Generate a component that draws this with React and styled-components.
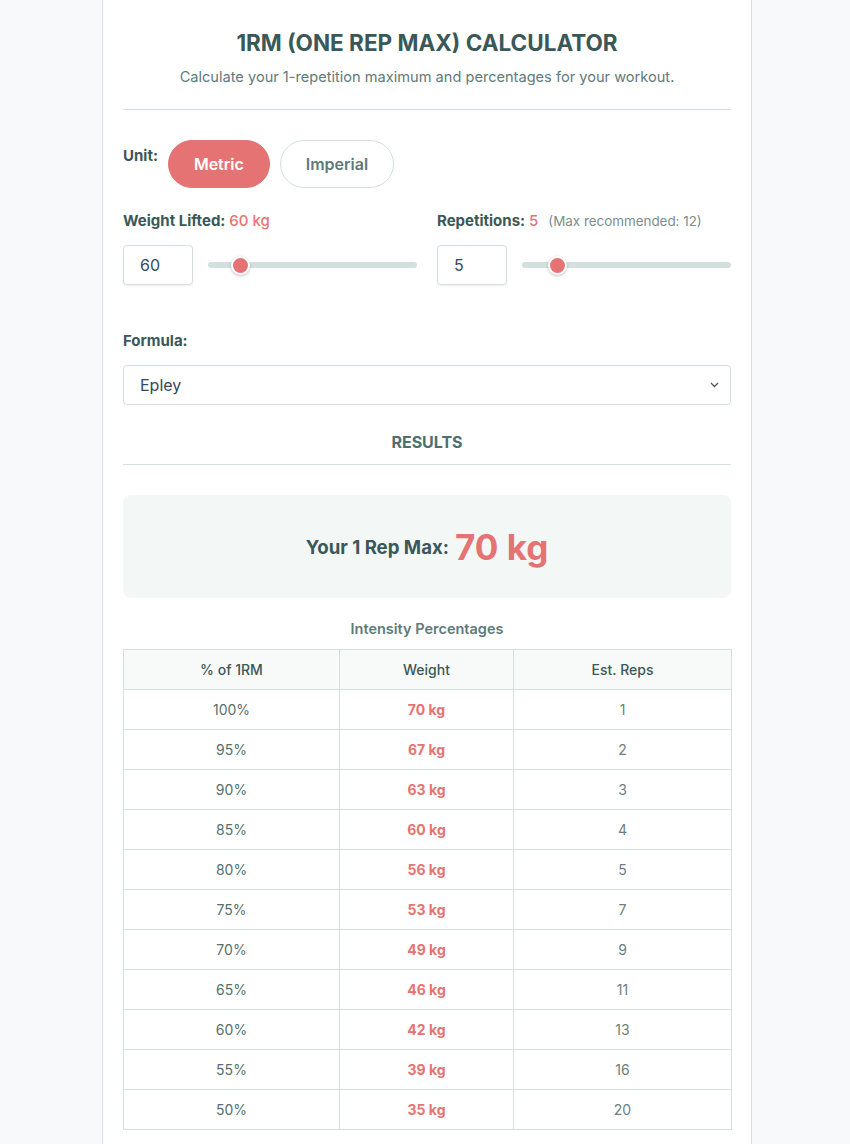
import React, { useState } from "react";
import styled, { createGlobalStyle } from "styled-components";

const RED = "#e57373";
const INK = "#3b5858";
const MUTED = "#5f7a7a";
const LINE = "#d3e0de";

const GlobalStyle = createGlobalStyle`
  * { box-sizing: border-box; }
  body {
    margin: 0;
    background: #f7f9fb;
    font-family: Inter, Roboto, "Liberation Sans", Arial, sans-serif;
    color: ${INK};
  }
`;

const Page = styled.div`
  display: flex;
  justify-content: center;
  padding-left: 4px;
`;

const Card = styled.div`
  width: 650px;
  background: #fff;
  border: 1px solid ${LINE};
  border-top: none;
  padding: 0 20px 40px;
`;

const Header = styled.header`
  text-align: center;
  padding-top: 30px;
  padding-bottom: 22px;
  border-bottom: 1px solid ${LINE};
`;

const Title = styled.h1`
  margin: 0;
  font-size: 22.5px;
  line-height: 26px;
  font-weight: 700;
  color: ${INK};
`;

const Subtitle = styled.p`
  margin: 11px 0 0;
  font-size: 14.6px;
  line-height: 20px;
  color: ${MUTED};
`;

const UnitRow = styled.div`
  display: flex;
  align-items: flex-start;
  gap: 10px;
  margin-top: 30px;
`;

const Label = styled.label`
  display: block;
  font-size: 15px;
  line-height: 18px;
  font-weight: 700;
  color: ${INK};
  padding-top: ${(p) => p.$offset || 0}px;
`;

const UnitButton = styled.button`
  height: 48px;
  padding: 0 25px;
  border-radius: 24px;
  font-family: inherit;
  font-size: 16px;
  font-weight: 600;
  cursor: pointer;
  border: 1px solid ${(p) => (p.$active ? RED : LINE)};
  background: ${(p) => (p.$active ? RED : "#fff")};
  color: ${(p) => (p.$active ? "#fff" : MUTED)};
`;

const TwoCols = styled.div`
  display: grid;
  grid-template-columns: 1fr 1fr;
  gap: 20px;
  margin-top: 24px;
`;

const Field = styled.div`
  display: flex;
  flex-direction: column;
  gap: 15px;
  margin-top: ${(p) => p.$mt || 0}px;
`;

const Value = styled.span`
  color: ${RED};
  font-weight: 500;
  margin-left: 4px;
`;

const Hint = styled.span`
  font-size: 13.4px;
  font-weight: 400;
  color: #7b8e8e;
  margin-left: 10px;
`;

const InputRow = styled.div`
  display: flex;
  align-items: center;
  gap: 15px;
`;

const NumberBox = styled.input`
  width: 70px;
  height: 40px;
  padding: 0 16px;
  border: 1px solid ${LINE};
  border-radius: 4px;
  box-shadow: 0 1px 2px rgba(0, 0, 0, 0.08);
  font-family: inherit;
  font-size: 16px;
  color: #34495e;
  outline: none;
`;

const Slider = styled.input`
  flex: 1;
  margin: 0;
  height: 18px;
  background: transparent;
  -webkit-appearance: none;
  appearance: none;

  &::-webkit-slider-runnable-track {
    height: 6px;
    border-radius: 3px;
    background: #d3e0dd;
  }
  &::-webkit-slider-thumb {
    -webkit-appearance: none;
    width: 19px;
    height: 19px;
    margin-top: -6.5px;
    border-radius: 50%;
    background: ${RED};
    border: 2px solid #fff;
    box-shadow: 0 1px 3px rgba(0, 0, 0, 0.25);
  }
`;

const SelectWrap = styled.div`
  position: relative;
`;

const Select = styled.select`
  width: 100%;
  height: 40px;
  padding: 0 16px;
  border: 1px solid ${LINE};
  border-radius: 4px;
  background: #fff;
  font-family: inherit;
  font-size: 16px;
  color: #34495e;
  -webkit-appearance: none;
  appearance: none;
  outline: none;
`;

const Chevron = styled.svg`
  position: absolute;
  right: 12px;
  top: 17px;
  pointer-events: none;
`;

const SectionHead = styled.h2`
  margin: 27px 0 0;
  padding-bottom: 12px;
  border-bottom: 1px solid ${LINE};
  text-align: center;
  font-size: 16px;
  line-height: 20px;
  font-weight: 700;
  color: #4f6f6f;
`;

const ResultBox = styled.div`
  margin-top: 30px;
  height: 103px;
  border-radius: 8px;
  background: #f3f7f6;
  display: flex;
  align-items: center;
  justify-content: center;
  gap: 6px;
  font-size: 18.6px;
  font-weight: 700;
  color: ${INK};
`;

const Big = styled.span`
  font-size: 35px;
  color: ${RED};
`;

const TableTitle = styled.h3`
  margin: 22px 0 11px;
  text-align: center;
  font-size: 14.5px;
  line-height: 18px;
  font-weight: 600;
  color: ${MUTED};
`;

const Table = styled.table`
  width: 100%;
  border-collapse: collapse;
  table-layout: fixed;
  font-size: 14px;
`;

const Th = styled.th`
  width: ${(p) => p.$w}px;
  height: 40px;
  border: 1px solid ${LINE};
  background: #f8faf9;
  font-weight: 500;
  color: ${INK};
`;

const Td = styled.td`
  height: 40px;
  border: 1px solid ${LINE};
  text-align: center;
  color: ${(p) => (p.$hot ? RED : p.$soft ? "#6b8080" : "#56706f")};
  font-weight: ${(p) => (p.$hot ? 700 : 400)};
`;

const percents = [100, 95, 90, 85, 80, 75, 70, 65, 60, 55, 50];
const repsFor = { 100: 1, 95: 2, 90: 3, 85: 4, 80: 5, 75: 7, 70: 9, 65: 11, 60: 13, 55: 16, 50: 20 };

export default function App() {
  const [unit, setUnit] = useState("kg");
  const [weight, setWeight] = useState(60);
  const [reps, setReps] = useState(5);
  const [formula, setFormula] = useState("epley");

  const oneRm = Math.round(weight * (1 + reps / 30));

  return (
    <>
      <GlobalStyle />
      <Page>
        <Card>
          <Header>
            <Title>1RM (ONE REP MAX) CALCULATOR</Title>
            <Subtitle>Calculate your 1-repetition maximum and percentages for your workout.</Subtitle>
          </Header>

          <UnitRow>
            <Label $offset={7}>Unit:</Label>
            <UnitButton $active={unit === "kg"} onClick={() => setUnit("kg")}>Metric</UnitButton>
            <UnitButton $active={unit === "lb"} onClick={() => setUnit("lb")}>Imperial</UnitButton>
          </UnitRow>

          <TwoCols>
            <Field>
              <Label>
                Weight Lifted:<Value>{weight} {unit}</Value>
              </Label>
              <InputRow>
                <NumberBox type="text" value={weight} onChange={(e) => setWeight(Number(e.target.value) || 0)} />
                <Slider type="range" min={0} max={500} value={weight} onChange={(e) => setWeight(Number(e.target.value))} />
              </InputRow>
            </Field>
            <Field>
              <Label>
                Repetitions:<Value>{reps}</Value>
                <Hint>(Max recommended: 12)</Hint>
              </Label>
              <InputRow>
                <NumberBox type="text" value={reps} onChange={(e) => setReps(Number(e.target.value) || 1)} />
                <Slider type="range" min={1} max={30} value={reps} onChange={(e) => setReps(Number(e.target.value))} />
              </InputRow>
            </Field>
          </TwoCols>

          <Field $mt={47}>
            <Label>Formula:</Label>
            <SelectWrap>
              <Select value={formula} onChange={(e) => setFormula(e.target.value)}>
                <option value="epley">Epley</option>
                <option value="brzycki">Brzycki</option>
                <option value="lombardi">Lombardi</option>
              </Select>
              <Chevron width="9" height="6" viewBox="0 0 9 6">
                <path d="M1 1l3.5 3.5L8 1" fill="none" stroke="#555" strokeWidth="1.3" />
              </Chevron>
            </SelectWrap>
          </Field>

          <SectionHead>RESULTS</SectionHead>

          <ResultBox>
            Your 1 Rep Max: <Big>{oneRm} {unit}</Big>
          </ResultBox>

          <TableTitle>Intensity Percentages</TableTitle>
          <Table>
            <thead>
              <tr>
                <Th $w={216}>% of 1RM</Th>
                <Th $w={174}>Weight</Th>
                <Th $w={218}>Est. Reps</Th>
              </tr>
            </thead>
            <tbody>
              {percents.map((p) => (
                <tr key={p}>
                  <Td>{p}%</Td>
                  <Td $hot>{Math.round((oneRm * p) / 100)} {unit}</Td>
                  <Td $soft>{repsFor[p]}</Td>
                </tr>
              ))}
            </tbody>
          </Table>
        </Card>
      </Page>
    </>
  );
}
